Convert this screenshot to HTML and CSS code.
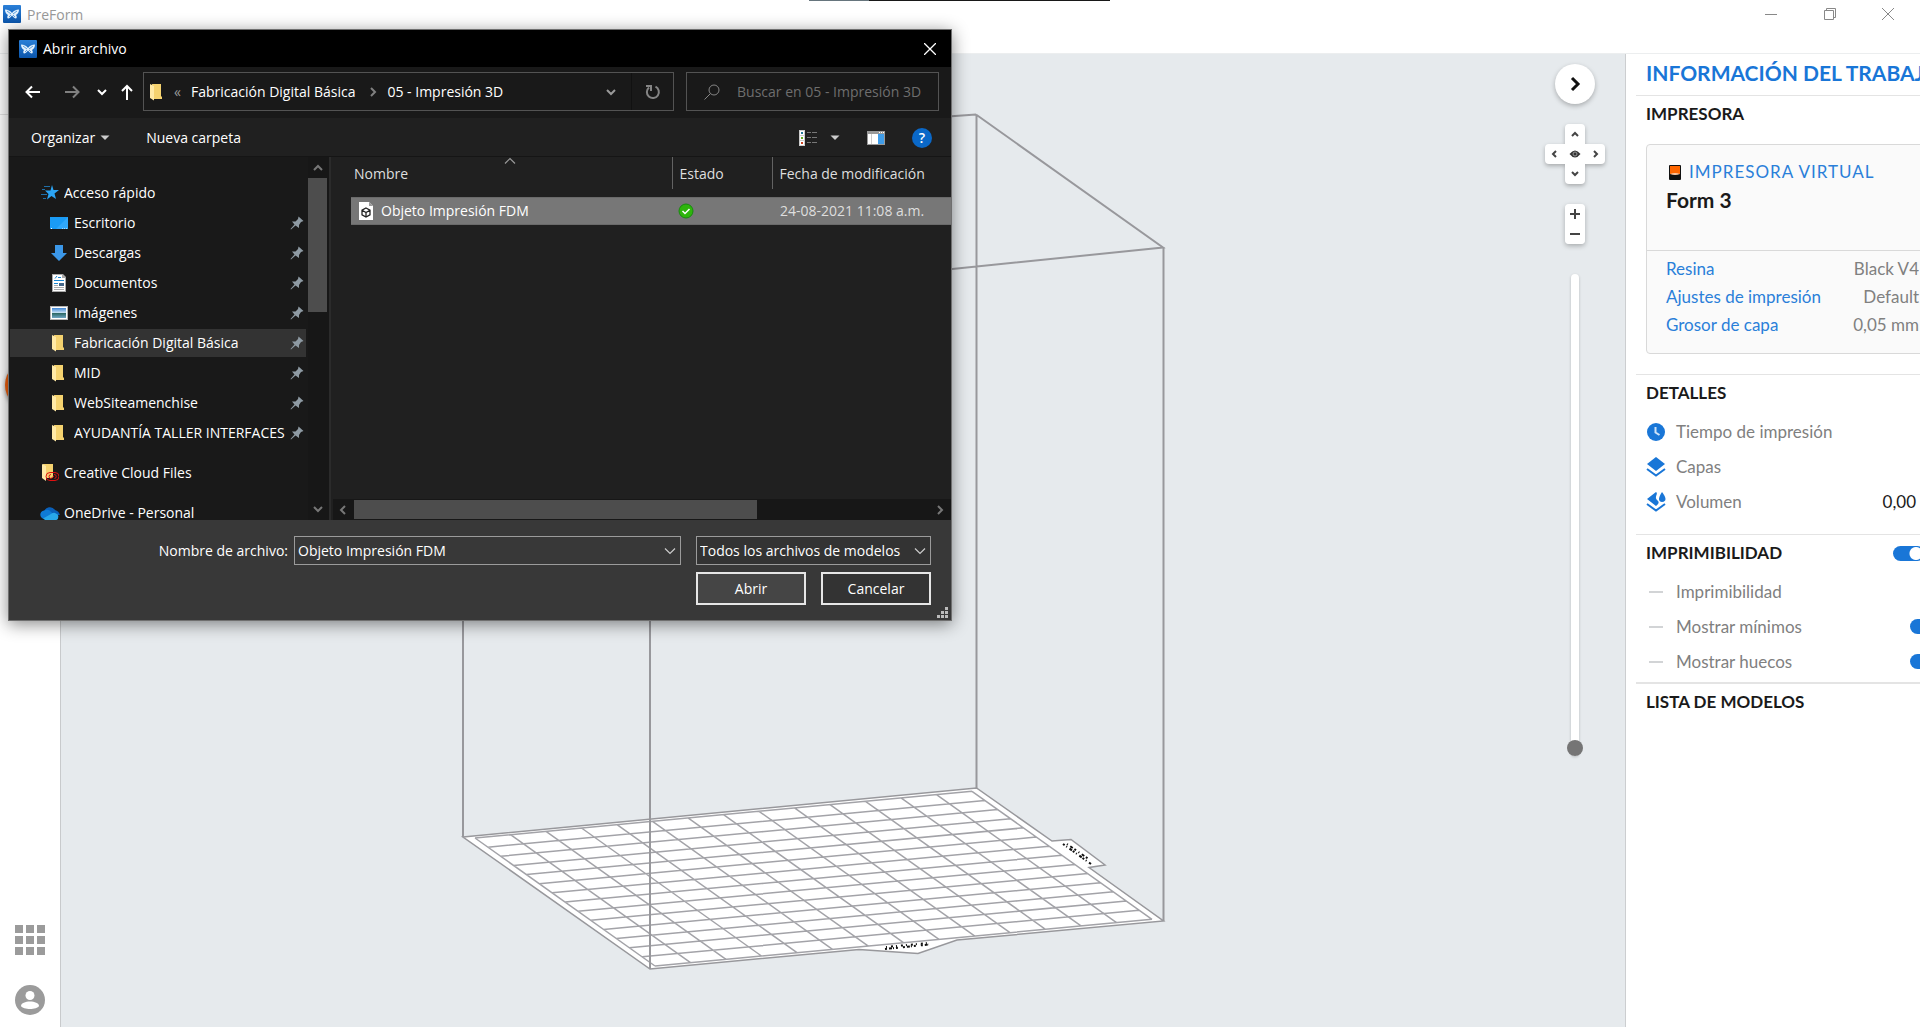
FILE: index.html
```html
<!DOCTYPE html>
<html lang="es">
<head>
<meta charset="utf-8">
<title>PreForm</title>
<link rel="stylesheet" href="styles.css">
</head>
<body>
<svg class="defs" aria-hidden="true">
  <defs>
    <linearGradient id="g-blue" x1="0" y1="0" x2="0" y2="1"><stop offset="0" stop-color="#2b80d8"/><stop offset="1" stop-color="#0b55ab"/></linearGradient>
    <linearGradient id="g-photo" x1="0" y1="0" x2="0" y2="1"><stop offset="0" stop-color="#3f86d6"/><stop offset="0.5" stop-color="#cfe6f5"/><stop offset="0.55" stop-color="#2f6a68"/><stop offset="1" stop-color="#6fa6c4"/></linearGradient>
    <symbol id="butterfly" viewBox="0 0 18 18">
      <rect width="18" height="18" rx="1" fill="url(#g-blue)"/>
      <path d="M2 4.500C5 4.500 7.500 6 9 8C10.500 6 13 4.500 16 4.500C16 7 15 9 13 10C14 11 14 13 13 13.500C11.500 13.500 10 12 9 10.500C8 12 6.500 13.500 5 13.500C4 13 4 11 5 10C3 9 2 7 2 4.500Z" fill="#e4f1fd"/>
      <path d="M4 6L8 9M14 6L10 9M6 12L8 10M12 12L10 10" stroke="#5d9edb" fill="none"/>
    </symbol>
    <symbol id="folder" viewBox="0 0 18 18">
      <path d="M4 1H13V13L14 14V16H5Z" fill="#f5d26f"/>
      <path d="M2 1L6 3V17.500L2 15Z" fill="#ffe9a6"/>
    </symbol>
    <symbol id="pin" viewBox="0 0 14 14">
      <path d="M8.500 0.500L13.500 5L11 6L9 9V12L5.500 9.500L1 13.500L0.500 13L4.500 8.500L2 5.500H5.500L8 3Z" fill="#8e9aa3"/>
    </symbol>
    <symbol id="chev-down" viewBox="0 0 12 12"><path d="M2 4L6 8L10 4" fill="none" stroke="currentColor" stroke-width="2"/></symbol>
    <symbol id="chev-thin" viewBox="0 0 12 12"><path d="M1 3.500L6 8.500L11 3.500" fill="none" stroke="currentColor" stroke-width="1.200"/></symbol>
    <symbol id="tri" viewBox="0 0 10 6"><path d="M0.500 0.500H9.500L5 5Z" fill="currentColor"/></symbol>
  </defs>
</svg>

<div class="app">
  <header class="titlebar">
    <svg class="ico18"><use href="#butterfly"/></svg>
    <span class="titlebar-name">PreForm</span>
    <div class="window-buttons">
      <button type="button" aria-label="Minimizar"><svg width="12" height="12"><path d="M0 6.500H12" stroke="#888"/></svg></button>
      <button type="button" aria-label="Restaurar"><svg width="12" height="12" fill="none" stroke="#888"><path d="M0.500 2.500H9.500V11.500H0.500ZM2.500 2.500V0.500H11.500V9.500H9.500"/></svg></button>
      <button type="button" aria-label="Cerrar"><svg width="12" height="12"><path d="M0 0L12 12M12 0L0 12" stroke="#888"/></svg></button>
    </div>
    <div class="capture-strip"></div>
  </header>

  <div class="workspace">
    <nav class="rail">
      <div class="rail-top"></div>
      <button type="button" class="print-button" aria-label="Imprimir"></button>
      <div class="rail-bottom">
        <button type="button" aria-label="Aplicaciones"><svg width="30" height="30" fill="#9b9b9b"><path d="M0 0H8V8H0ZM11 0H19V8H11ZM22 0H30V8H22ZM0 11H8V19H0ZM11 11H19V19H11ZM22 11H30V19H22ZM0 22H8V30H0ZM11 22H19V30H11ZM22 22H30V30H22Z"/></svg></button>
        <button type="button" aria-label="Cuenta"><svg width="30" height="30"><circle cx="15" cy="15" r="15" fill="#9b9b9b"/><circle cx="15" cy="10.500" r="4.500" fill="#fff"/><path d="M6 21C6 15 24 15 24 21C22 25 8 25 6 21Z" fill="#fff"/></svg></button>
      </div>
    </nav>

    <main class="viewport">
      <svg class="scene" viewBox="61 54 1564 973" fill="none" stroke="#98989c" stroke-width="2">
        <path d="M976 114.500L463 151M463 299L650 300M463 151V837M976.500 114.500V788M976 114.500L1163 247.500L650 300"/>
        <path d="M463 837L976.500 788L1052 841L1071 839.500L1105 865L1089 867.500L1163.500 921L957 940L918 953.500L859 949.500L650 969Z" fill="#fff" stroke-width="1.500"/>
        <g transform="matrix(35.5 -3.336 12.857 9.143 475 838)">
          <path class="grid-lines" d="M0 0H14M0 1H14M0 2H14M0 3H14M0 4H14M0 5H14M0 6H14M0 7H14M0 8H14M0 9H14M0 10H14M0 11H14M0 12H14M0 13H14M0 14H14M0 0V14M1 0V14M2 0V14M3 0V14M4 0V14M5 0V14M6 0V14M7 0V14M8 0V14M9 0V14M10 0V14M11 0V14M12 0V14M13 0V14M14 0V14"/>
        </g>
        <path d="M650 300V969M1163.500 921V247.500"/>
        <g stroke="#111" stroke-width="2">
          <path d="M1063 844L1091 864" stroke-dasharray="2 2 1 3 3 1"/>
          <path d="M1067 844L1090 860" stroke-dasharray="1 3 3 2 2 3"/>
          <path d="M885 949L929 944.500" stroke-dasharray="2 2 3 1 1 2 2 5"/>
          <path d="M886 947L928 943" stroke-dasharray="1 4 2 3"/>
        </g>
      </svg>
      <div class="view-tools">
        <button type="button" class="collapse" aria-label="Contraer panel"><svg width="16" height="18"><path d="M5 3L11 9L5 15" fill="none" stroke="#111" stroke-width="3"/></svg></button>
        <div class="dpad">
          <button type="button" class="up" aria-label="Arriba"><svg width="8" height="8"><path d="M1 6L4 3L7 6"/></svg></button>
          <button type="button" class="left" aria-label="Izquierda"><svg width="8" height="8"><path d="M5 1L2 4L5 7"/></svg></button>
          <button type="button" class="center" aria-label="Centrar vista"><svg width="12" height="10"><path d="M0.500 5Q6 -2 11.500 5Q6 12 0.500 5Z" fill="#333" stroke="none"/><circle cx="6" cy="5" r="2" stroke="#999" stroke-width="1"/></svg></button>
          <button type="button" class="right" aria-label="Derecha"><svg width="8" height="8"><path d="M3 1L6 4L3 7"/></svg></button>
          <button type="button" class="down" aria-label="Abajo"><svg width="8" height="8"><path d="M1 2L4 5L7 2"/></svg></button>
        </div>
        <div class="zoom">
          <button type="button" aria-label="Acercar"><svg width="10" height="10"><path d="M5 0V10M0 5H10"/></svg></button>
          <button type="button" aria-label="Alejar"><svg width="10" height="10"><path d="M0 5H10"/></svg></button>
        </div>
        <input type="range" class="layer-slider" min="0" max="100" value="0" aria-label="Capa visible">
      </div>
    </main>

    <aside class="panel">
      <div class="panel-body">
        <h1>INFORMACIÓN DEL TRABAJO</h1>
        <section class="printer">
          <h2>IMPRESORA</h2>
          <div class="card">
            <div class="card-head">
              <a href="#" class="virtual"><svg width="12" height="15"><rect width="12" height="15" rx="1" fill="#111"/><path d="M1 1H11V9H1Z" fill="#f60"/><path d="M1 9Q6 7 11 9Q6 11 1 9Z" fill="#ffc9a3"/></svg>IMPRESORA VIRTUAL</a>
              <strong>Form 3</strong>
            </div>
            <dl>
              <div><dt><a href="#">Resina</a></dt><dd>Black V4</dd></div>
              <div><dt><a href="#">Ajustes de impresión</a></dt><dd>Default</dd></div>
              <div><dt><a href="#">Grosor de capa</a></dt><dd>0,05 mm</dd></div>
            </dl>
          </div>
        </section>
        <section>
          <h2>DETALLES</h2>
          <ul>
            <li><svg width="20" height="20"><circle cx="10" cy="10" r="9" fill="#1976d7"/><path d="M9.500 5V10.500L13.500 13" fill="none" stroke="#cfe3f8" stroke-width="2"/></svg><span>Tiempo de impresión</span></li>
            <li><svg width="20" height="20"><path d="M10 0L19 7L10 14L1 7Z" fill="#1976d7"/><path d="M1 12L10 18.500L19 12" fill="none" stroke="#1976d7" stroke-width="2"/></svg><span>Capas</span></li>
            <li><svg width="20" height="20"><path d="M10 0C13 2 7 5 12 9Q14 11 10 14L1 7Z" fill="#1976d7"/><path d="M1 12L10 18.500L19 12" fill="none" stroke="#1976d7" stroke-width="2"/><path d="M16 0Q23 9 16 10Q10 9 16 0Z" fill="#1976d7"/></svg><span>Volumen</span><output>0,00</output></li>
          </ul>
        </section>
        <section class="printability">
          <h2><label for="t-all">IMPRIMIBILIDAD</label><input type="checkbox" class="toggle" id="t-all" checked></h2>
          <ul>
            <li><i class="dash"></i><span>Imprimibilidad</span></li>
            <li><i class="dash"></i><label for="t-min">Mostrar mínimos</label><input type="checkbox" class="toggle" id="t-min" checked></li>
            <li><i class="dash"></i><label for="t-cup">Mostrar huecos</label><input type="checkbox" class="toggle" id="t-cup" checked></li>
          </ul>
        </section>
        <section class="models"><h2>LISTA DE MODELOS</h2></section>
      </div>
    </aside>
  </div>
</div>

<div class="dialog" role="dialog" aria-labelledby="dlg-title">
  <header class="dlg-title">
    <svg class="ico18"><use href="#butterfly"/></svg>
    <span id="dlg-title">Abrir archivo</span>
    <button type="button" aria-label="Cerrar diálogo"><svg width="12" height="12"><path d="M0 0L12 12M12 0L0 12" stroke="#fff" stroke-width="1.300"/></svg></button>
  </header>

  <div class="dlg-nav">
    <div class="history">
      <button type="button" aria-label="Atrás"><svg width="16" height="14"><path d="M15 7H2M7 1.500L1.500 7L7 12.500" fill="none" stroke="#fff" stroke-width="2"/></svg></button>
      <button type="button" aria-label="Adelante"><svg width="16" height="14"><path d="M1 7H14M9 1.500L14.500 7L9 12.500" fill="none" stroke="#808080" stroke-width="2"/></svg></button>
      <button type="button" aria-label="Recientes"><svg class="ico12"><use href="#chev-down"/></svg></button>
      <button type="button" aria-label="Subir"><svg width="12" height="16"><path d="M6 16V2M1 7L6 2L11 7" fill="none" stroke="#fff" stroke-width="2"/></svg></button>
    </div>
    <div class="address">
      <svg class="ico18"><use href="#folder"/></svg>
      <span class="crumb-more">«</span>
      <a href="#">Fabricación Digital Básica</a>
      <svg width="8" height="10"><path d="M2 1L6 5L2 9" fill="none" stroke="#808080" stroke-width="2"/></svg>
      <a href="#">05 - Impresión 3D</a>
      <button type="button" class="addr-drop" aria-label="Ubicaciones anteriores"><svg class="ico12"><use href="#chev-down"/></svg></button>
      <button type="button" class="refresh" aria-label="Actualizar"><svg width="16" height="16" fill="none" stroke="#858585" stroke-width="2"><path d="M10.500 2.700A6 6 0 1 1 4 3.500M1 2H6V7"/></svg></button>
    </div>
    <div class="search">
      <svg width="16" height="16" fill="none" stroke="#858585"><circle cx="10" cy="6" r="5"/><path d="M6.500 9.500L0.500 15.500"/></svg>
      <input type="text" placeholder="Buscar en 05 - Impresión 3D" aria-label="Buscar">
    </div>
  </div>

  <div class="dlg-tools">
    <button type="button" class="organize">Organizar<svg width="10" height="6"><use href="#tri"/></svg></button>
    <button type="button">Nueva carpeta</button>
    <div class="view-options">
      <button type="button" aria-label="Vista"><svg width="18" height="16"><path d="M0 0H6V16H0Z" fill="#ccc"/><path d="M1 1H5V5H1ZM1 6H5V10H1ZM1 11H5V15H1Z" fill="#fff"/><path d="M2 2H4V4H2Z" fill="#279"/><path d="M2 7H4V9H2Z" fill="#6a2"/><path d="M2 12H4V14H2Z" fill="#c42"/><path d="M8 2.500H12M13 2.500H18M8 7.500H12M13 7.500H18M8 12.500H12M13 12.500H18" stroke="#777"/></svg></button>
      <button type="button" aria-label="Más vistas"><svg width="10" height="6"><use href="#tri"/></svg></button>
      <button type="button" aria-label="Panel de vista previa"><svg width="18" height="14"><path d="M0 0H18V14H0Z" fill="#999"/><path d="M1 3H11V13H1Z" fill="#fff"/><path d="M4.500 3V13" stroke="#ccc"/><path d="M11 3H17V13H11Z" fill="#3f9ce8"/><path d="M12 1.500H17" stroke="#fff" stroke-dasharray="1 1"/></svg></button>
      <button type="button" class="help" aria-label="Ayuda">?</button>
    </div>
  </div>

  <div class="dlg-body">
    <nav class="tree">
      <ul>
        <li class="root"><svg class="ico18" viewBox="0 0 18 18"><path d="M11 1L12.500 6H18L13.500 9.500L15 15L10.500 12L6 15.500L7.500 10L4 6.500H9.500Z" fill="#2ba4f4"/><path d="M3 2.500H9M1 5.500H4M0 10.500H6M2 14.500H5" stroke="#1f6fa8"/></svg><a href="#">Acceso rápido</a></li>
        <li><svg class="ico18" viewBox="0 0 18 18"><path d="M0 3H18V15H0Z" fill="#1a9bf5"/><path d="M1 14.500H3M12 14.500H17" stroke="#fff" stroke-dasharray="1 1"/><path d="M18 3V15L6 15Z" fill="#45b3ff" opacity=".5"/></svg><a href="#">Escritorio</a><svg class="pin"><use href="#pin"/></svg></li>
        <li><svg class="ico18" viewBox="0 0 18 18"><path d="M5 1H13V9H17L9 17L1 9H5Z" fill="#3b97e8"/></svg><a href="#">Descargas</a><svg class="pin"><use href="#pin"/></svg></li>
        <li><svg class="ico18" viewBox="0 0 18 18"><path d="M2 0H13L16 3V18H2Z" fill="#a9a9a9"/><path d="M3 1H12V4H15V17H3Z" fill="#fff"/><path d="M8 3.500H11M4 6.500H14M4 9.500H8" stroke="#1a86d0"/><path d="M5 4.500L7 2" stroke="#1a86d0"/><path d="M9 9H14V12H9Z" fill="#468"/><path d="M4 11.500H8M4 13.500H14M4 15.500H14" stroke="#aaa"/></svg><a href="#">Documentos</a><svg class="pin"><use href="#pin"/></svg></li>
        <li><svg class="ico18" viewBox="0 0 18 18"><path d="M0 2H18V16H0Z" fill="#b5b5b5"/><path d="M1 3H17V15H1Z" fill="#fff"/><path d="M2 4H16V14H2Z" fill="url(#g-photo)"/></svg><a href="#">Imágenes</a><svg class="pin"><use href="#pin"/></svg></li>
        <li class="selected"><svg class="ico18"><use href="#folder"/></svg><a href="#">Fabricación Digital Básica</a><svg class="pin"><use href="#pin"/></svg></li>
        <li><svg class="ico18"><use href="#folder"/></svg><a href="#">MID</a><svg class="pin"><use href="#pin"/></svg></li>
        <li><svg class="ico18"><use href="#folder"/></svg><a href="#">WebSiteamenchise</a><svg class="pin"><use href="#pin"/></svg></li>
        <li><svg class="ico18"><use href="#folder"/></svg><a href="#">AYUDANTÍA TALLER INTERFACES</a><svg class="pin"><use href="#pin"/></svg></li>
        <li class="root spaced"><svg class="ico18" viewBox="0 0 18 18"><path d="M2 0H12V14H3Z" fill="#f5d26f"/><path d="M1 0L5 2V17L1 14Z" fill="#ffe9a6"/><path d="M9 8.500H14A4 4 0 0 1 14 16.500H9A4 4 0 0 1 9 8.500ZM10 10.500A2 2 0 1 0 10 14.500L13 12M13 10.500A2 2 0 0 1 13.500 14.500" fill="none" stroke="#e01010" stroke-width="1"/></svg><a href="#">Creative Cloud Files</a></li>
        <li class="root spaced"><svg class="ico18 onedrive" viewBox="0 0 20 14"><path d="M4 6A6 6 0 0 1 15 4Q19 5 20 9L10 10L2 8Z" fill="#0a5fb8"/><path d="M4 4.500A5 5 0 0 1 11 6L16 10L5 13A4.200 4.200 0 0 1 4 4.500Z" fill="#0f7bd6"/><path d="M3 12.500L11 8Q14 6 16 7.500A3.500 3.500 0 0 1 16.500 14H5Z" fill="#28a8ea"/></svg><a href="#">OneDrive - Personal</a></li>
      </ul>
      <div class="vscroll">
        <svg class="ico12 flip"><use href="#chev-down"/></svg>
        <div class="vthumb"></div>
        <svg class="ico12"><use href="#chev-down"/></svg>
      </div>
    </nav>
    <div class="files">
      <table>
        <colgroup><col class="c-name"><col class="c-state"><col></colgroup>
        <thead><tr><th>Nombre<svg class="sort ico12"><use href="#chev-thin"/></svg></th><th>Estado</th><th>Fecha de modificación</th></tr></thead>
        <tbody><tr>
          <td><div class="file"><svg class="ico18" viewBox="0 0 18 18"><path d="M2 0H12L16 4V18H2Z" fill="#fff"/><path d="M12 0V4H16" fill="#999"/><path d="M9 6L13 8.200V12.800L9 15L5 12.800V8.200ZM5 8.200L9 10.500L13 8.200M9 10.500V15" fill="none" stroke="#222" stroke-width="1.300"/></svg>Objeto Impresión FDM</div></td>
          <td class="state"><svg width="16" height="16"><circle cx="8" cy="8" r="7" fill="#2eb50c" stroke="#188a10"/><path d="M4.500 8L7 10.500L11.500 6" fill="none" stroke="#fff" stroke-width="1.500"/></svg></td>
          <td class="date">24-08-2021 11:08 a.m.</td>
        </tr></tbody>
      </table>
      <div class="hscroll">
        <svg class="ico12 turn-left"><use href="#chev-down"/></svg>
        <div class="htrack"><div class="hthumb"></div></div>
        <svg class="ico12 turn-right"><use href="#chev-down"/></svg>
      </div>
    </div>
  </div>

  <footer class="dlg-foot">
    <label for="fname">Nombre de archivo:</label>
    <div class="field"><input type="text" id="fname" value="Objeto Impresión FDM"><svg class="ico12"><use href="#chev-thin"/></svg></div>
    <div class="field type"><select aria-label="Tipo de archivo"><option>Todos los archivos de modelos</option></select><svg class="ico12"><use href="#chev-thin"/></svg></div>
    <div class="actions">
      <button type="button" class="primary">Abrir</button>
      <button type="button">Cancelar</button>
    </div>
    <svg class="grip" width="12" height="12" fill="#bbb"><path d="M8 0H11V3H8ZM4 4H7V7H4ZM8 4H11V7H8ZM0 8H3V11H0ZM4 8H7V11H4ZM8 8H11V11H8Z"/></svg>
  </footer>
</div>
</body>
</html>
```
FILE: styles.css
```css
* { box-sizing: border-box; }
body { margin: 0; overflow: hidden; background: #fff; font: 14px/20px "Open Sans", "Noto Sans", sans-serif; }
button { margin: 0; padding: 0; border: 0; background: none; color: inherit; font: inherit; display: flex; align-items: center; justify-content: center; }
a { color: inherit; text-decoration: none; }
ul, dl, dd, h1, h2 { margin: 0; padding: 0; list-style: none; }
svg { display: block; flex: none; }
.defs { position: absolute; width: 0; height: 0; }
.ico18 { width: 18px; height: 18px; }
.ico12 { width: 12px; height: 12px; }

/* Main window */
.app { display: flex; flex-direction: column; height: 100vh; }
.titlebar { position: relative; display: flex; align-items: flex-start; height: 54px; padding: 5px 8px 0 3px; border-bottom: 1px solid #eceeef; color: #999; }
.titlebar-name { margin-left: 6px; line-height: 19px; }
.window-buttons { display: flex; margin-left: auto; }
.window-buttons button { width: 59px; height: 18px; }
.window-buttons button:last-child { width: 48px; margin-left: 5px; }
.capture-strip { position: absolute; top: 0; left: 809px; width: 301px; height: 1px; background: linear-gradient(to right, #66757d 60px, #181818 60px); }
.workspace { display: flex; flex: 1; min-height: 0; }

.rail { display: flex; flex-direction: column; width: 61px; border-right: 1px solid #c8cacc; }
.rail-top { height: 61px; border-bottom: 1px solid #e3e3e3; }
.print-button { width: 50px; height: 50px; margin: 245px 0 0 5px; border-radius: 50%; background: #f2600c; box-shadow: 0 2px 4px #0006; }
.rail-bottom { display: flex; flex-direction: column; align-items: center; gap: 30px; margin-top: auto; padding-bottom: 12px; }

.viewport { position: relative; flex: 1; min-width: 0; background: #e6eaed; }
.scene { width: 100%; height: 100%; }
.grid-lines { vector-effect: non-scaling-stroke; stroke: #a3a3a8; stroke-width: 1.5px; }
.view-tools { position: absolute; top: 10px; right: 20px; display: flex; flex-direction: column; align-items: center; width: 60px; }
.view-tools button { background: #fff; }
.collapse { width: 40px; height: 40px; border-radius: 50%; box-shadow: 0 2px 5px #0004; }
.dpad { display: grid; grid-template: repeat(3, 20px) / repeat(3, 20px); margin: 20px 0; filter: drop-shadow(0 2px 2px #0004); }
.dpad svg, .zoom svg { fill: none; stroke: #444; stroke-width: 2; }
.up { grid-area: 1 / 2; border-radius: 4px 4px 0 0; }
.left { grid-area: 2 / 1; border-radius: 4px 0 0 4px; }
.center { grid-area: 2 / 2; }
.right { grid-area: 2 / 3; border-radius: 0 4px 4px 0; }
.down { grid-area: 3 / 2; border-radius: 0 0 4px 4px; }
.zoom { overflow: hidden; border-radius: 4px; box-shadow: 0 2px 5px #0004; }
.zoom button { width: 20px; height: 20px; }
.layer-slider { appearance: none; writing-mode: vertical-lr; direction: rtl; width: 16px; height: 482px; margin: 30px 0 0; background: none; }
.layer-slider::-webkit-slider-runnable-track { width: 8px; margin: 0 4px; border-radius: 4px; background: #fff; box-shadow: 0 1px 3px #0003; }
.layer-slider::-webkit-slider-thumb { appearance: none; width: 16px; height: 16px; margin-left: -4px; border-radius: 50%; background: #757575; }

/* Job information */
.panel { width: 295px; overflow: hidden; border-left: 1px solid #ccced0; color: #808080; font: 17px/24px Lato, "Open Sans", sans-serif; }
.panel-body { width: 330px; padding-left: 10px; }
.panel h1 { padding: 7px 0 10px 10px; color: #1976d7; font-size: 21px; line-height: 24px; white-space: nowrap; }
.panel section { padding: 5px 0 15px 10px; border-top: 1px solid #e4e4e4; }
.panel h2 { display: flex; align-items: center; color: #1a1a1a; font-size: 17px; line-height: 26px; }
.panel .printer { padding-bottom: 20px; }
.card { margin-top: 17px; border: 1px solid #d9d9d9; border-radius: 4px; background: #fafafa; }
.card a { color: #2a7fd9; }
.card-head { height: 106px; padding: 15px 19px; border-bottom: 1px solid #d9d9d9; }
.virtual { display: flex; align-items: center; gap: 8px; padding-left: 3px; letter-spacing: 1px; }
.card strong { display: block; margin-top: 3px; color: #1a1a1a; font-size: 21px; line-height: 26px; }
.card dl { display: flex; flex-direction: column; gap: 4px; padding: 6px 36px 16px 19px; }
.card dl div { display: flex; justify-content: space-between; }
.panel li { display: flex; align-items: center; gap: 10px; height: 35px; }
.panel ul { padding-top: 8px; }
.panel output { margin-left: auto; margin-right: 40px; color: #1a1a1a; }
.dash { width: 14px; height: 2px; margin: 0 3px; background: #d2d4d6; }
.toggle { appearance: none; width: 32px; height: 15px; margin: 0 14px 0 auto; border-radius: 8px; background: radial-gradient(circle at 23px 50%, #fff 6px, #1976d7 7px); }
h2 .toggle { margin-right: 31px; }
.panel .printability { padding-bottom: 3px; }
.panel .models { border-top-width: 2px; }

/* Open file dialog */
.dialog { position: absolute; top: 29px; left: 8px; width: 944px; border: 1px solid #6f6f6f; background: #191919; color: #fff; box-shadow: 0 3px 16px #0007; }
.dlg-title { display: flex; align-items: center; height: 37px; padding: 0 4px 0 10px; background: #000; }
.dlg-title span { margin-left: 6px; }
.dlg-title button { width: 34px; height: 36px; margin-left: auto; }
.dlg-nav { display: flex; align-items: center; height: 51px; padding: 0 12px 2px 16px; }
.history { display: flex; align-items: center; width: 118px; }
.history button:nth-child(2) { margin-left: 23px; }
.history button:nth-child(3) { margin-left: 16px; }
.history button:nth-child(4) { margin-left: 13px; }
.address, .search { display: flex; align-items: center; height: 39px; border: 1px solid #535353; }
.address { flex: 1; padding-left: 4px; }
.crumb-more { margin: 0 10px 0 8px; color: #999; }
.address > svg + a { margin-left: 10px; }
.address a + svg { margin-left: 14px; }
.addr-drop { width: 40px; height: 37px; margin-left: auto; color: #999; }
.refresh { width: 42px; height: 37px; border-left: 1px solid #111; }
.search { width: 253px; margin-left: 12px; padding-left: 17px; gap: 17px; }
.search input { flex: 1; min-width: 0; padding: 0; border: 0; outline: 0; background: none; color: #fff; font: inherit; }
.search input::placeholder { color: #6e6e6e; opacity: 1; }
.dlg-tools { display: flex; align-items: center; height: 39px; padding: 2px 19px 0 22px; border-bottom: 1px solid #151515; background: #202020; }
.organize { gap: 5px; margin-right: 36px; }
.dlg-tools svg { color: #ccc; }
.view-options { display: flex; align-items: center; margin-left: auto; }
.view-options button:nth-child(2) { margin: 0 27px 0 13px; }
.help { width: 20px; height: 20px; margin-left: 27px; border-radius: 50%; background: #0a68c8; font-weight: 600; }

.dlg-body { display: flex; height: 363px; background: #202020; }
.tree { display: flex; width: 322px; overflow: hidden; border-right: 2px solid #2b2b2b; background: #191919; }
.tree ul { flex: 1; min-width: 0; padding: 22px 2px 0 1px; }
.tree li { display: flex; align-items: center; height: 28px; margin-bottom: 2px; padding: 0 2px 0 40px; }
.tree li a { flex: 1; min-width: 0; margin-left: 6px; overflow: hidden; white-space: nowrap; }
.tree .root { padding-left: 31px; }
.tree .root a { margin-left: 5px; }
.tree .spaced { margin-top: 12px; }
.tree .selected { background: #333; }
.onedrive { transform: scale(1.1); }
.pin { width: 14px; height: 14px; }
.vscroll { display: flex; flex-direction: column; align-items: center; width: 21px; padding: 5px 2px 5px 0; background: #171717; color: #777; }
.vthumb { width: 19px; height: 134px; margin: 4px 0 auto; background: #4d4d4d; }
.flip { transform: rotate(180deg); }
.turn-left { transform: rotate(90deg); }
.turn-right { transform: rotate(-90deg); }

.files { display: flex; flex: 1; flex-direction: column; min-width: 0; }
.files table { width: 600px; margin-left: auto; border-collapse: collapse; table-layout: fixed; }
.c-name { width: 321px; }
.c-state { width: 100px; }
.files th { position: relative; height: 32px; padding: 2px 0 0 7px; border-right: 1px solid #636363; color: #dedede; font-weight: 400; text-align: left; white-space: nowrap; }
.files th:first-child { padding-left: 3px; }
.files th:last-child { border-right: 0; }
.sort { position: absolute; top: -2px; left: 153px; color: #999; transform: rotate(180deg); }
.files tbody::before { content: ""; display: block; height: 8px; }
.files td { height: 27px; padding: 0 0 0 8px; border: 1px solid #6a6a6a; border-width: 1px 0; background: #777; white-space: nowrap; }
.files td:first-child, .files .state { padding-left: 6px; }
.file { display: flex; align-items: center; gap: 6px; }
.files .date { color: #dedede; }
.hscroll { display: flex; align-items: center; height: 21px; margin: auto 0 0 2px; padding: 0 5px 0 4px; background: #171717; color: #777; }
.htrack { flex: 1; margin: 0 5px; }
.hthumb { width: 70%; height: 19px; background: #4d4d4d; }

.dlg-foot { position: relative; display: grid; grid-template-columns: 1fr 387px 235px; grid-template-rows: 29px 33px; gap: 7px 15px; padding: 16px 20px 15px; background: #383838; }
.dlg-foot > label { margin-right: -9px; text-align: right; line-height: 29px; }
.field { display: flex; align-items: center; height: 29px; padding-right: 4px; border: 1px solid #9b9b9b; }
.field.type { background: #333; }
.field input, .field select { flex: 1; min-width: 0; height: 100%; padding: 0 3px; appearance: none; border: 0; outline: 0; background: none; color: #fff; font: inherit; }
.field svg { color: #ccc; }
.actions { display: flex; grid-column: 3; gap: 15px; }
.actions button { flex: 1; border: 2px solid #e6e6e6; background: #333; }
.actions .primary { background: #454545; }
.grip { position: absolute; right: 2px; bottom: 1px; }
```
